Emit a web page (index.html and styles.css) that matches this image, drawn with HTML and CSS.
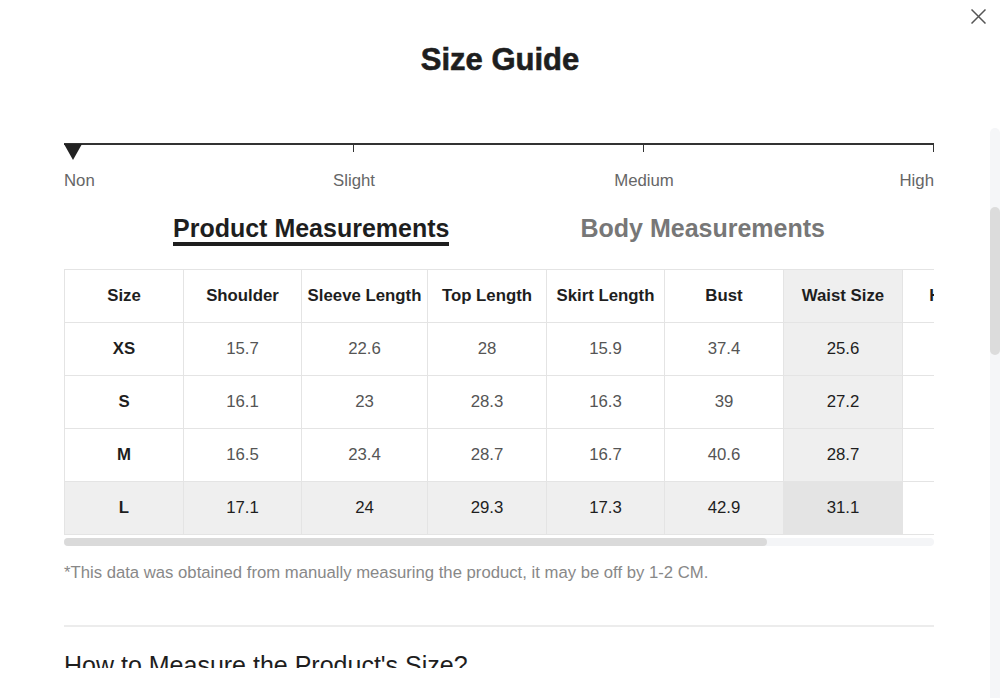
FILE: index.html
```html
<!DOCTYPE html>
<html lang="en">
<head>
<meta charset="utf-8">
<title>Size Guide</title>
<link rel="stylesheet" href="styles.css">
</head>
<body>
<div class="modal">
  <button class="close" aria-label="Close">
    <svg width="15" height="15" viewBox="0 0 15 15"><path d="M0.5 0.5 L14.5 14.5 M14.5 0.5 L0.5 14.5" stroke="#555" stroke-width="1.5" fill="none"/></svg>
  </button>
  <header class="modal-head">
    <h1 class="title">Size Guide</h1>
  </header>
  <div class="modal-body">
    <div class="stretch">
      <div class="stretch-bar">
        <span class="seg"></span><span class="seg"></span><span class="seg"></span>
        <span class="marker"></span>
      </div>
      <div class="stretch-labels">
        <span class="lbl lbl-non">Non</span>
        <span class="lbl lbl-slight">Slight</span>
        <span class="lbl lbl-medium">Medium</span>
        <span class="lbl lbl-high">High</span>
      </div>
    </div>

    <div class="tabs">
      <span class="tab active">Product Measurements</span>
      <span class="tab">Body Measurements</span>
    </div>

    <div class="table-wrap">
      <table class="sizes">
        <colgroup>
          <col class="c119"><col class="c118"><col class="c126"><col class="c119"><col class="c118"><col class="c119"><col class="c119"><col class="c119"><col class="c120">
        </colgroup>
        <thead>
          <tr>
            <th>Size</th><th>Shoulder</th><th>Sleeve Length</th><th>Top Length</th><th>Skirt Length</th><th>Bust</th><th class="hl">Waist Size</th><th>Hip Size</th><th>Hem Width</th>
          </tr>
        </thead>
        <tbody>
          <tr>
            <th>XS</th><td>15.7</td><td>22.6</td><td>28</td><td>15.9</td><td>37.4</td><td class="hl">25.6</td><td>35.4</td><td>41.3</td>
          </tr>
          <tr>
            <th>S</th><td>16.1</td><td>23</td><td>28.3</td><td>16.3</td><td>39</td><td class="hl">27.2</td><td>37</td><td>42.9</td>
          </tr>
          <tr>
            <th>M</th><td>16.5</td><td>23.4</td><td>28.7</td><td>16.7</td><td>40.6</td><td class="hl">28.7</td><td>38.6</td><td>44.5</td>
          </tr>
          <tr>
            <th class="hl">L</th><td class="hl">17.1</td><td class="hl">24</td><td class="hl">29.3</td><td class="hl">17.3</td><td class="hl">42.9</td><td class="hl cross">31.1</td><td>40.9</td><td>46.9</td>
          </tr>
        </tbody>
      </table>
    </div>
    <div class="hscroll"><div class="hthumb"></div></div>

    <p class="note">*This data was obtained from manually measuring the product, it may be off by 1-2 CM.</p>

    <hr class="divider">

    <h2 class="howto">How to Measure the Product's Size?</h2>
  </div>
  <div class="vscroll"><div class="vthumb"></div></div>
</div>
</body>
</html>
```

FILE: styles.css
```css
* { box-sizing: border-box; }

html, body {
  margin: 0;
  padding: 0;
  background: #fff;
}

body {
  font-family: "Liberation Sans", Arial, Helvetica, sans-serif;
  color: #222;
}

.modal {
  position: relative;
  width: 1000px;
  height: 698px;
  background: #fff;
  overflow: hidden;
}

.close {
  position: absolute;
  top: 9px;
  right: 14px;
  width: 15px;
  height: 15px;
  padding: 0;
  border: 0;
  background: none;
  display: block;
}
.close svg { display: block; }

.modal-head {
  padding: 42px 0 50px;
  text-align: center;
}

.title {
  margin: 0;
  font-size: 31px;
  line-height: 36px;
  font-weight: 700;
  color: #1e1e1e;
  -webkit-text-stroke: 0.6px #1e1e1e;
}

.modal-body {
  height: 540px;
  overflow: hidden;
  padding: 15px 66px 0 64px;
}

/* stretch scale */
.stretch { width: 870px; }

.stretch-bar {
  position: relative;
  display: flex;
  border-top: 2px solid #333;
}
.seg {
  flex: 1;
  height: 7px;
  border-right: 1.5px solid #333;
}
.marker {
  position: absolute;
  left: 0;
  top: -1px;
  width: 0;
  height: 0;
  border-left: 9px solid transparent;
  border-right: 9px solid transparent;
  border-top: 16px solid #222;
}

.stretch-labels {
  margin-top: 19px;
  display: grid;
  grid-template-columns: repeat(6, 1fr);
  font-size: 16.8px;
  line-height: 20px;
  color: #666;
}
.lbl-non { grid-column: 1; text-align: left; }
.lbl-slight { grid-column: 2 / 4; text-align: center; }
.lbl-medium { grid-column: 4 / 6; text-align: center; }
.lbl-high { grid-column: 6; text-align: right; }

/* tabs */
.tabs {
  margin-top: 24px;
  width: 870px;
  display: flex;
  justify-content: center;
  gap: 131px;
}
.tab {
  font-size: 25px;
  line-height: 27px;
  font-weight: 700;
  color: #777;
  border-bottom: 4px solid transparent;
}
.tab.active {
  color: #1e1e1e;
  border-bottom-color: #1e1e1e;
}

/* table */
.table-wrap {
  margin-top: 23px;
  width: 870px;
  overflow: hidden;
}

.sizes {
  border-collapse: collapse;
  table-layout: fixed;
  width: 1077px;
}
.c119 { width: 119px; }
.c118 { width: 118px; }
.c126 { width: 126px; }
.c120 { width: 120px; }

.sizes tr { height: 53px; }
.sizes th,
.sizes td {
  border: 1px solid #e4e4e4;
  text-align: center;
  vertical-align: middle;
  font-size: 16.8px;
  padding: 0;
  white-space: nowrap;
}
.sizes th {
  font-weight: 700;
  color: #1e1e1e;
}
.sizes td {
  font-weight: 400;
  color: #555;
}
.sizes .hl {
  background: #efefef;
  color: #1e1e1e;
}
.sizes .cross {
  background: #e4e4e4;
}

/* drawn horizontal scrollbar of the table */
.hscroll {
  margin-top: 3px;
  width: 870px;
  height: 8px;
  background: #f4f5f7;
  border-radius: 4px;
}
.hthumb {
  width: 703px;
  height: 8px;
  background: #dadada;
  border-radius: 4px;
}

.note {
  margin: 17px 0 0;
  font-size: 16.7px;
  line-height: 20px;
  color: #888;
}

.divider {
  margin: 42px 0 0;
  width: 870px;
  height: 0;
  border: 0;
  border-top: 2px solid #ececec;
}

.howto {
  margin: 24px 0 0;
  font-size: 25px;
  line-height: 28px;
  font-weight: 400;
  color: #1e1e1e;
}

/* page scrollbar (drawn) */
.vscroll {
  position: absolute;
  right: 0;
  top: 128px;
  width: 10px;
  height: 570px;
  background: #f5f6f8;
  border-radius: 5px 5px 0 0;
}
.vthumb {
  margin-top: 79px;
  height: 148px;
  background: #dcdcdc;
  border-radius: 5px;
}
```
